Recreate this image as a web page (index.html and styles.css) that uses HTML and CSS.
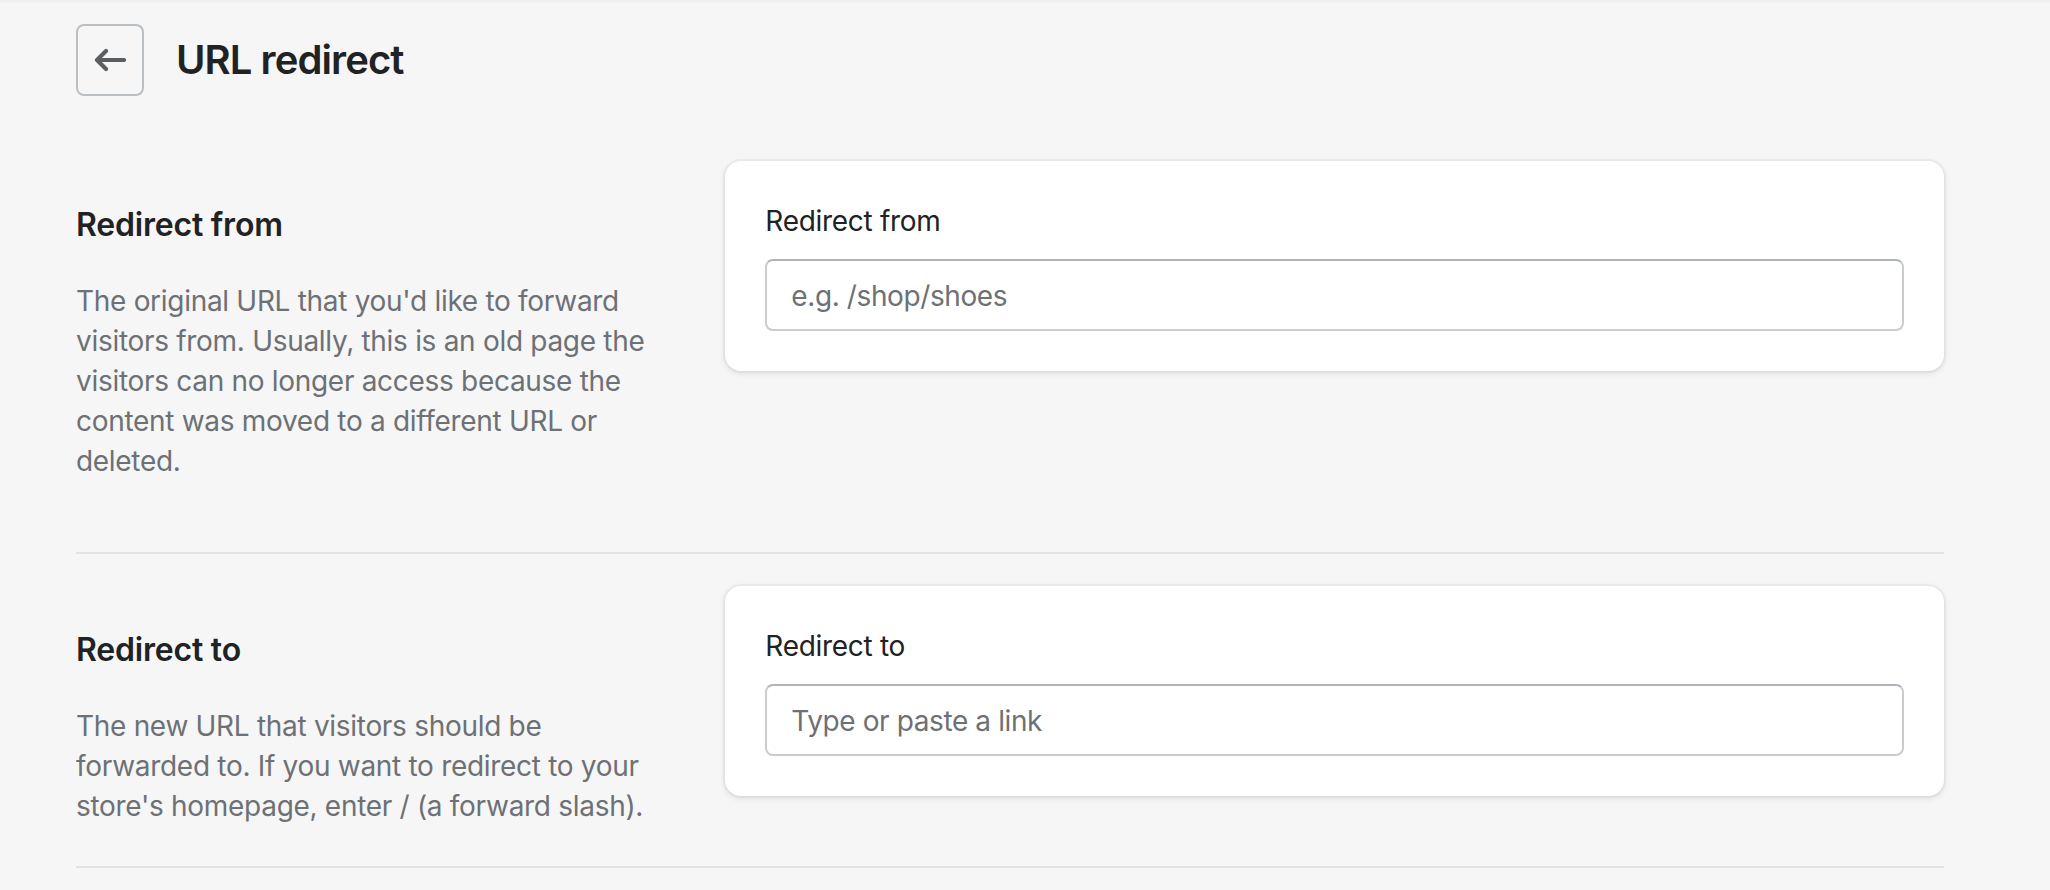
FILE: index.html
```html
<!DOCTYPE html>
<html lang="en">
<head>
<meta charset="utf-8">
<title>URL redirect</title>
<link rel="stylesheet" href="styles.css">
</head>
<body>
<div class="page">
  <header class="page-header">
    <button class="back-btn" type="button" aria-label="Back">
      <svg width="32" height="24" viewBox="0 0 32 24" aria-hidden="true">
        <path d="M30 12H3M12 3 3 12l9 9" fill="none" stroke="#5c5f62" stroke-width="4.2" stroke-linecap="round" stroke-linejoin="round"/>
      </svg>
    </button>
    <h1 class="page-title">URL redirect</h1>
  </header>

  <main class="layout">
    <section class="section section--first">
      <div class="annotation">
        <h2 class="annotation-title">Redirect from</h2>
        <p class="annotation-text">The original URL that you'd like to forward visitors from. Usually, this is an old page the visitors can no longer access because the content was moved to a different URL or deleted.</p>
      </div>
      <div class="card">
        <label class="field-label" for="from">Redirect from</label>
        <input class="field-input" id="from" type="text" placeholder="e.g. /shop/shoes">
      </div>
    </section>
    <hr class="divider">
    <section class="section section--next">
      <div class="annotation">
        <h2 class="annotation-title">Redirect to</h2>
        <p class="annotation-text">The new URL that visitors should be forwarded to. If you want to redirect to your store's homepage, enter / (a forward slash).</p>
      </div>
      <div class="card">
        <label class="field-label" for="to">Redirect to</label>
        <input class="field-input" id="to" type="text" placeholder="Type or paste a link">
      </div>
    </section>
    <hr class="divider">
  </main>
</div>
</body>
</html>
```

FILE: styles.css
```css
* { box-sizing: border-box; }

html, body {
  margin: 0;
  padding: 0;
}

body {
  background: linear-gradient(#ececec 0, #f6f6f6 4px) no-repeat, #f6f6f6;
  font-family: Inter, "Noto Sans", "Liberation Sans", sans-serif;
  color: #202223;
  min-height: 890px;
}

.page {
  padding: 24px 106px 0 76px;
}

.page-header {
  display: flex;
  align-items: center;
  gap: 32px;
  height: 72px;
}

.back-btn {
  width: 68px;
  height: 72px;
  padding: 0;
  margin: 0;
  display: flex;
  align-items: center;
  justify-content: center;
  background: transparent;
  border: 2px solid #babfc3;
  border-radius: 8px;
  cursor: pointer;
}

.back-btn svg { display: block; }

.page-title {
  margin: 0;
  font-size: 40px;
  line-height: 48px;
  font-weight: 600;
  letter-spacing: -0.9px;
  color: #202223;
}

.layout {
  margin-top: 65px;
}

.section {
  display: grid;
  grid-template-columns: 1fr 2fr;
  column-gap: 40px;
  align-items: start;
}

.section--first { padding-bottom: 71px; }
.section--next { padding-top: 32px; padding-bottom: 40px; }

.annotation {
  padding-top: 40px;
  padding-right: 24px;
}

.annotation-title {
  margin: 0 0 32px;
  font-size: 32px;
  line-height: 48px;
  font-weight: 600;
  letter-spacing: -0.2px;
  color: #202223;
}

.annotation-text {
  margin: 0;
  font-size: 28px;
  line-height: 40px;
  font-weight: 400;
  letter-spacing: -0.3px;
  color: #6d7175;
}

.card {
  background: #ffffff;
  border-radius: 16px;
  padding: 40px;
  box-shadow: 0 0 0 2px rgba(63, 63, 68, 0.04), 0 2px 6px 0 rgba(63, 63, 68, 0.14);
  display: flex;
  flex-direction: column;
}

.field-label {
  font-size: 28px;
  line-height: 40px;
  letter-spacing: -0.3px;
  color: #202223;
}

.field-input {
  margin-top: 18px;
  height: 72px;
  width: 100%;
  padding: 2px 24px 0;
  border: 2px solid #c9cccf;
  border-top-color: #aeb4b9;
  border-radius: 8px;
  background: #fff;
  font-family: inherit;
  font-size: 28px;
  letter-spacing: -0.4px;
  color: #202223;
  outline: none;
}

.field-input::placeholder {
  color: #6d7175;
  opacity: 1;
}

.divider {
  margin: 0;
  border: 0;
  height: 2px;
  background: #e1e3e5;
}
```
